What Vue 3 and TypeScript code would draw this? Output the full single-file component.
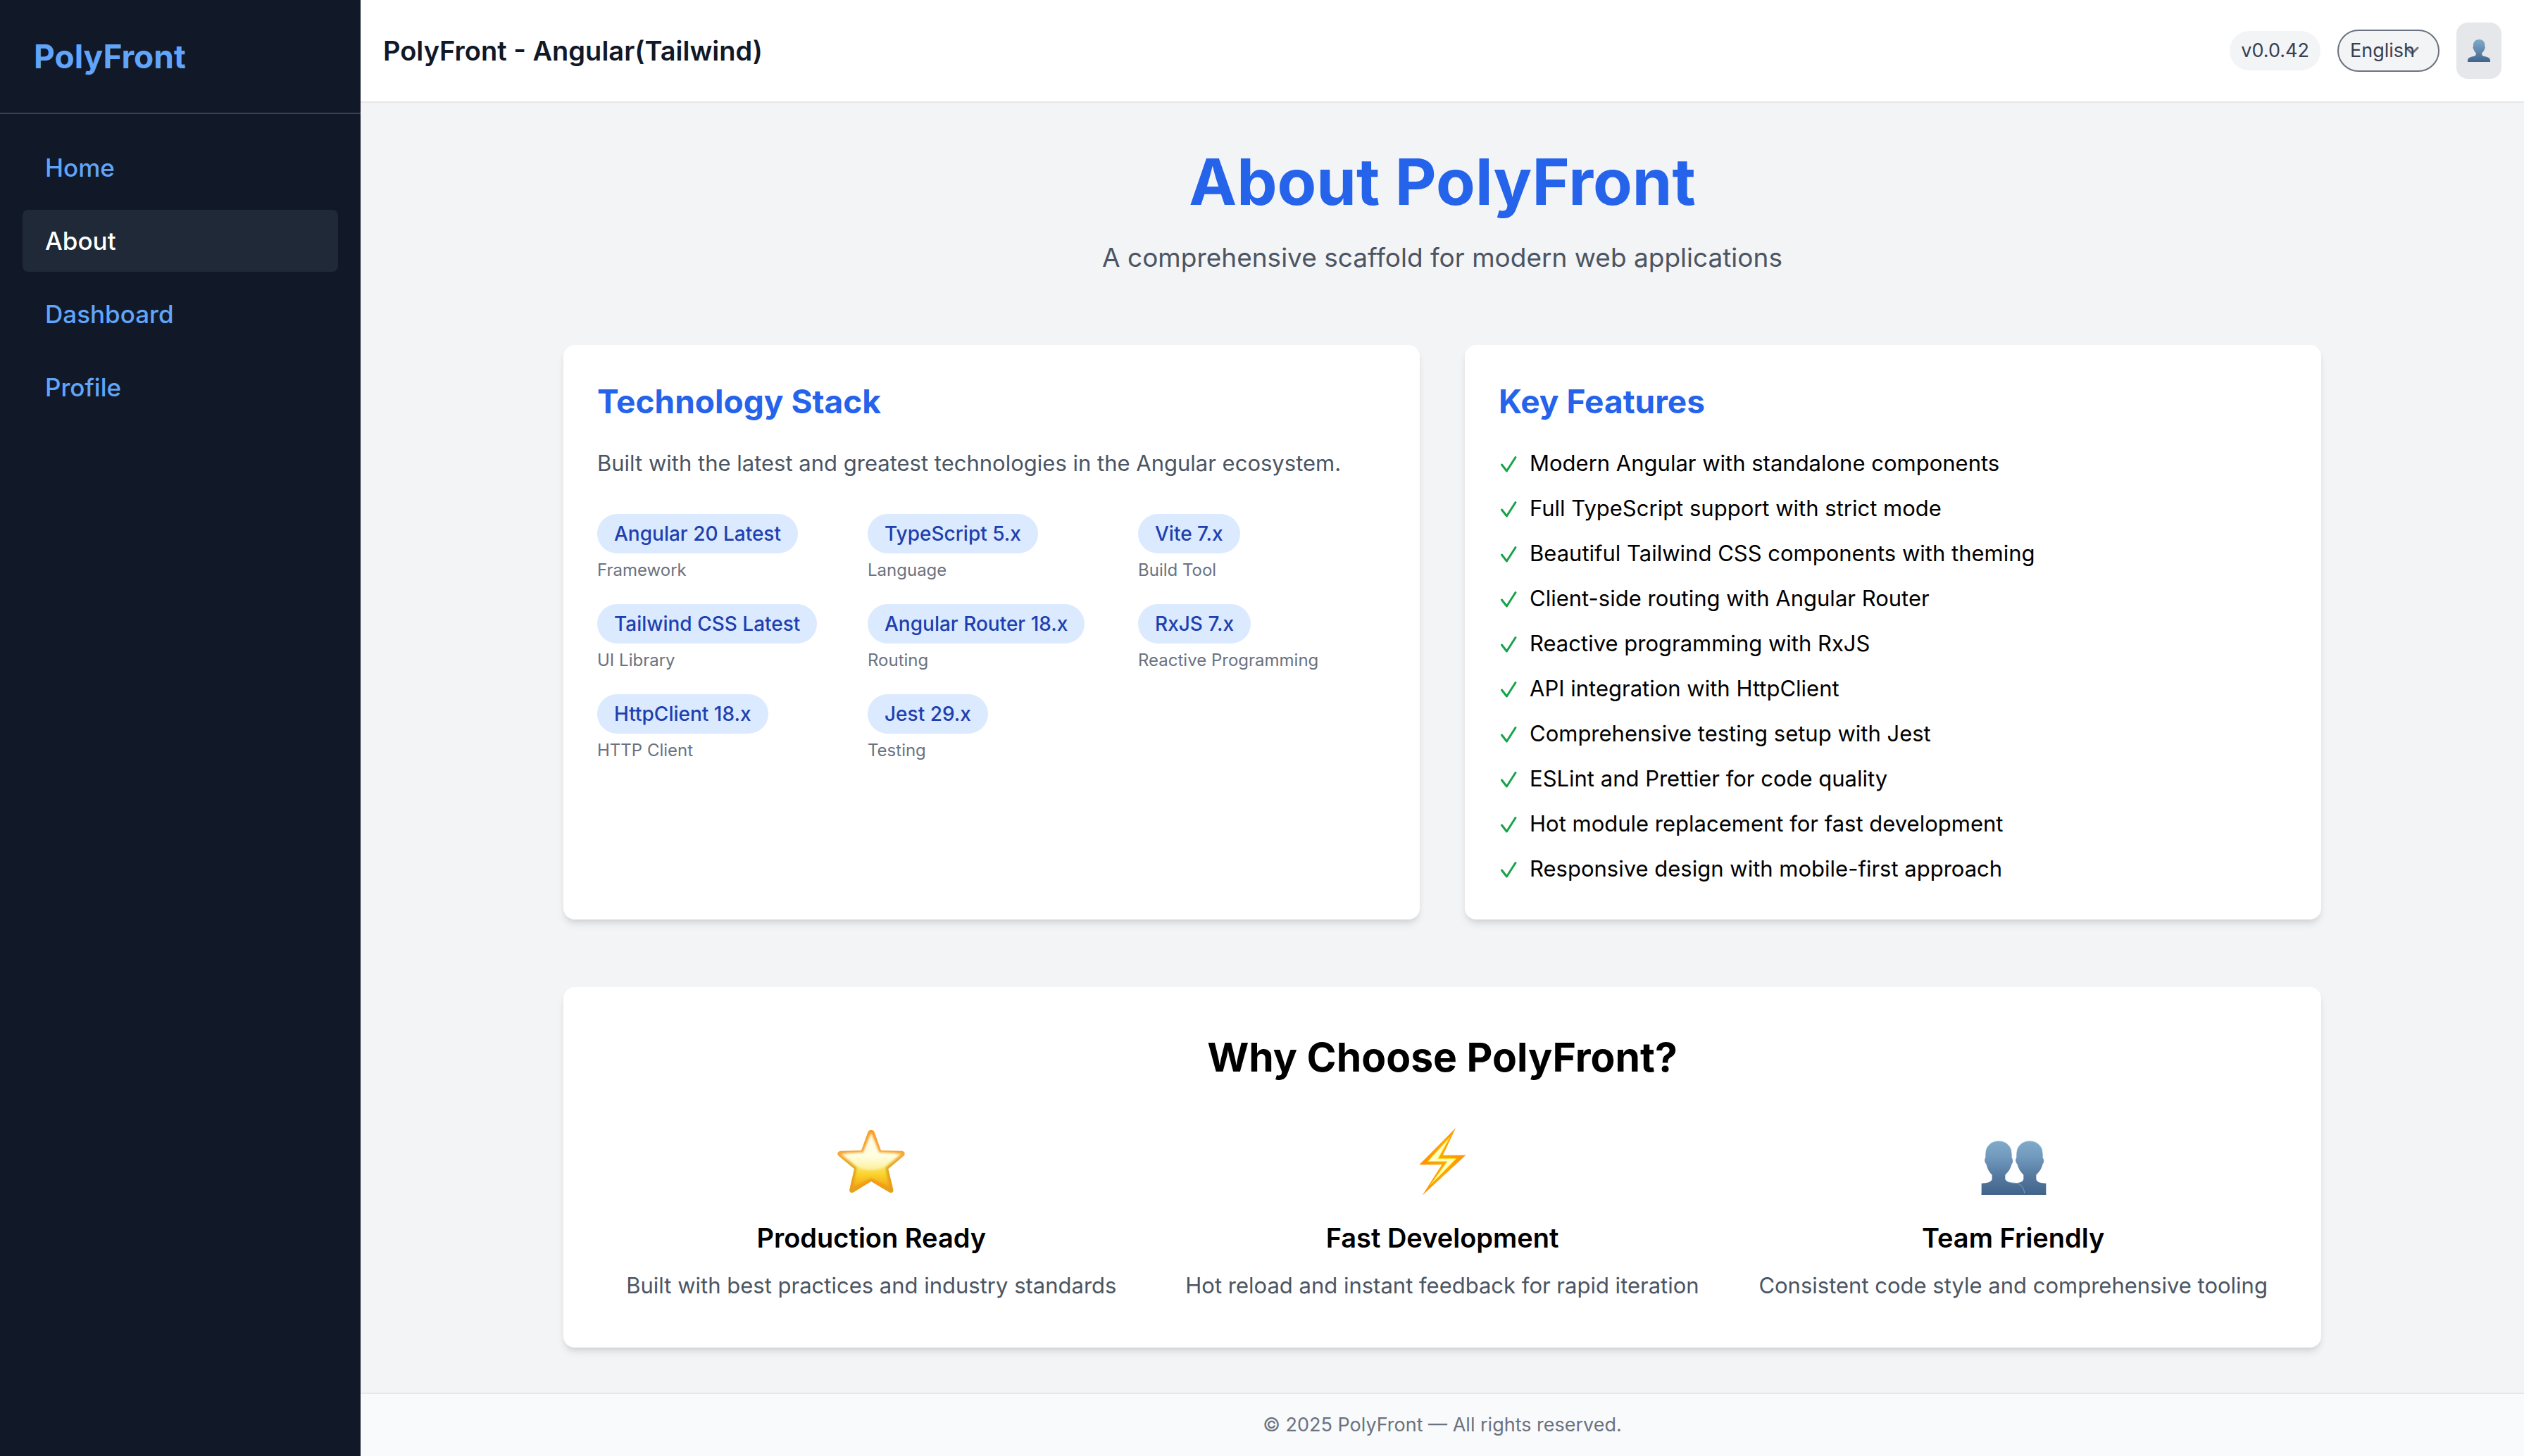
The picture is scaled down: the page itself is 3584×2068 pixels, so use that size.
<script setup lang="ts">
import { ref } from 'vue'

interface NavItem {
  label: string
  active?: boolean
}

interface Tech {
  name: string
  role: string
}

const navItems: NavItem[] = [
  { label: 'Home' },
  { label: 'About', active: true },
  { label: 'Dashboard' },
  { label: 'Profile' },
]

const language = ref('English')

const stack: Tech[] = [
  { name: 'Angular 20 Latest', role: 'Framework' },
  { name: 'TypeScript 5.x', role: 'Language' },
  { name: 'Vite 7.x', role: 'Build Tool' },
  { name: 'Tailwind CSS Latest', role: 'UI Library' },
  { name: 'Angular Router 18.x', role: 'Routing' },
  { name: 'RxJS 7.x', role: 'Reactive Programming' },
  { name: 'HttpClient 18.x', role: 'HTTP Client' },
  { name: 'Jest 29.x', role: 'Testing' },
]

const features: string[] = [
  'Modern Angular with standalone components',
  'Full TypeScript support with strict mode',
  'Beautiful Tailwind CSS components with theming',
  'Client-side routing with Angular Router',
  'Reactive programming with RxJS',
  'API integration with HttpClient',
  'Comprehensive testing setup with Jest',
  'ESLint and Prettier for code quality',
  'Hot module replacement for fast development',
  'Responsive design with mobile-first approach',
]
</script>

<template>
  <div class="layout">
    <aside class="sidebar">
      <div class="brand">PolyFront</div>
      <nav class="nav">
        <a
          v-for="item in navItems"
          :key="item.label"
          href="#"
          class="nav-link"
          :class="{ active: item.active }"
          >{{ item.label }}</a
        >
      </nav>
    </aside>

    <div class="page">
      <header class="topbar">
        <span class="title">PolyFront - Angular(Tailwind)</span>
        <div class="tools">
          <span class="version">v0.0.42</span>
          <div class="language">
            <svg class="chevron" viewBox="0 0 24 24" aria-hidden="true">
              <path d="M4 8l8 8 8-8" fill="none" stroke="#6b7280" stroke-width="3" stroke-linecap="round" stroke-linejoin="round" />
            </svg>
            <select v-model="language" class="language-select" aria-label="Language">
              <option>English</option>
            </select>
          </div>
          <button class="avatar" type="button" aria-label="User menu">
            <svg class="avatar-icon" viewBox="1212 168 96 96" aria-hidden="true">
              <defs>
                <linearGradient id="person" x1="0" y1="0" x2="0" y2="1">
                  <stop offset="0" stop-color="#7fabcb" />
                  <stop offset="0.5" stop-color="#6489ad" />
                  <stop offset="1" stop-color="#3f638a" />
                </linearGradient>
              </defs>
              <path
                fill="url(#person)"
                d="M1261 168c15 0 24 10 24 24v6c3 2 2 8-1 11-2 7-6 12-11 16v8c1 5 7 6 14 8 14 3 21 8 21 17v6h-96v-6c0-9 7-14 21-17 7-2 13-3 14-8v-8c-5-4-8-9-10-16-3-3-4-9-1-11v-6c0-14 10-24 25-24z"
              />
            </svg>
          </button>
        </div>
      </header>

      <main class="main">
        <div class="container">
          <div class="hero">
            <h1>About PolyFront</h1>
            <p>A comprehensive scaffold for modern web applications</p>
          </div>

          <div class="cards">
            <section class="card">
              <h2>Technology Stack</h2>
              <p class="intro">Built with the latest and greatest technologies in the Angular ecosystem.</p>
              <div class="stack">
                <div v-for="tech in stack" :key="tech.name" class="tech">
                  <span class="badge">{{ tech.name }}</span>
                  <span class="role">{{ tech.role }}</span>
                </div>
              </div>
            </section>

            <section class="card">
              <h2>Key Features</h2>
              <ul class="features">
                <li v-for="feature in features" :key="feature">
                  <svg class="check" viewBox="0 0 28 48" aria-hidden="true">
                    <path d="M4.500 26l7 9L24 15.500" fill="none" stroke="#16a34a" stroke-width="3" stroke-linecap="round" stroke-linejoin="round" />
                  </svg>
                  <span>{{ feature }}</span>
                </li>
              </ul>
            </section>
          </div>

          <section class="card why">
            <h2>Why Choose PolyFront?</h2>
            <div class="reasons">
              <div class="reason">
                <svg class="emoji" viewBox="116 96 288 288" aria-hidden="true">
                  <defs>
                    <linearGradient id="starEdge" x1="0" y1="0" x2="0" y2="1">
                      <stop offset="0" stop-color="#f99a24" />
                      <stop offset="0.4" stop-color="#f5a837" />
                      <stop offset="0.65" stop-color="#d9a81c" />
                      <stop offset="0.82" stop-color="#f59a12" />
                      <stop offset="1" stop-color="#d9a520" />
                    </linearGradient>
                    <linearGradient id="starFill" x1="0" y1="0" x2="0" y2="1">
                      <stop offset="0" stop-color="#ffe9b0" />
                      <stop offset="0.2" stop-color="#fffde8" />
                      <stop offset="0.45" stop-color="#fffcd2" />
                      <stop offset="0.62" stop-color="#fbe672" />
                      <stop offset="0.76" stop-color="#fcd32a" />
                      <stop offset="1" stop-color="#eda91a" />
                    </linearGradient>
                    <filter id="starSoft" x="-10%" y="-10%" width="120%" height="120%">
                      <feGaussianBlur stdDeviation="4" />
                    </filter>
                    <clipPath id="starClip">
                      <path d="M260 104c7 0 11 4 14 11l28 77 87 2c14 0 19 13 9 22l-65 55 21 87c3 13-8 18-18 12l-76-46-74 46c-11 6-21-1-18-13l20-86-66-55c-10-9-5-21 9-22l87-2 28-77c3-7 7-11 14-11z" />
                    </clipPath>
                  </defs>
                  <g clip-path="url(#starClip)">
                    <rect x="110" y="96" width="300" height="288" fill="url(#starEdge)" />
                    <path
                      filter="url(#starSoft)"
                      fill="url(#starFill)"
                      d="M260 116l33 86 95 5-67 58 16 84-77-39-77 39 16-84-67-58 95-5z"
                    />
                    <path d="M150 204l78-4 32-78 32 78 78 4-50 56q-60 30-120 0z" fill="#ffffe6" opacity="0.5" filter="url(#starSoft)" />
                  </g>
                </svg>
                <h3>Production Ready</h3>
                <p>Built with best practices and industry standards</p>
              </div>
              <div class="reason">
                <svg class="emoji" viewBox="90 96 288 288" aria-hidden="true">
                  <defs>
                    <linearGradient id="boltEdge" x1="0" y1="0" x2="1" y2="0">
                      <stop offset="0" stop-color="#ff9000" />
                      <stop offset="0.5" stop-color="#fda60a" />
                      <stop offset="1" stop-color="#ff9208" />
                    </linearGradient>
                  </defs>
                  <path d="M291 96L136 253h96l-83 130L334 212h-97z" fill="url(#boltEdge)" />
                  <path d="M266 136L172 239h83l-70 98L293 227h-77z" fill="#ffffc8" stroke="#ffe21f" stroke-width="3" />
                </svg>
                <h3>Fast Development</h3>
                <p>Hot reload and instant feedback for rapid iteration</p>
              </div>
              <div class="reason">
                <svg class="emoji" viewBox="92 96 288 288" aria-hidden="true">
                  <defs>
                    <linearGradient id="team" gradientUnits="userSpaceOnUse" x1="0" y1="152" x2="0" y2="381">
                      <stop offset="0" stop-color="#80aac9" />
                      <stop offset="0.3" stop-color="#7199bd" />
                      <stop offset="0.65" stop-color="#55799f" />
                      <stop offset="1" stop-color="#40648b" />
                    </linearGradient>
                  </defs>
                  <g fill="url(#team)">
                    <path d="M305 152c34 0 56 26 56 58v14c6 4 6 18 0 26-4 18-14 34-28 46v18c2 12 16 17 42 18v49H225v-49c30 0 52-4 54-18v-18c-14-12-22-28-27-46-8-8-8-22-3-27v-13c0-32 22-58 56-58z" />
                    <path d="M173 152c34 0 56 26 56 58v14c6 4 6 18 0 26-4 18-14 34-28 46v18c4 12 22 16 42 17 26 2 38 22 40 50H100v-49c26-1 42-6 45-18v-18c-14-12-20-28-25-46-8-8-8-22-3-27v-13c0-32 22-58 56-58z" />
                  </g>
                  <path d="M201 316c8 12 24 14 42 15 26 2 38 20 40 44" fill="none" stroke="#79a6c4" stroke-width="3" />
                  <path d="M119 195c5-26 26-42 54-42s49 16 54 42M251 195c5-26 26-42 54-42s49 16 54 42" fill="none" stroke="#8dbdd4" stroke-width="3" />
                  <path d="M100 379h275" stroke="#365a83" stroke-width="4" />
                </svg>
                <h3>Team Friendly</h3>
                <p>Consistent code style and comprehensive tooling</p>
              </div>
            </div>
          </section>
        </div>
      </main>

      <footer class="footer">© 2025 PolyFront — All rights reserved.</footer>
    </div>
  </div>
</template>

<style>
body {
  margin: 0;
  background: #f3f4f6;
}
</style>

<style scoped>
.layout {
  display: flex;
  min-height: 100vh;
  font-family: Inter, 'Liberation Sans', sans-serif;
  font-size: 31px;
  line-height: 48px;
  color: #000;
}

h1,
h2,
h3,
p,
ul {
  margin: 0;
  padding: 0;
}

.sidebar {
  flex: none;
  width: 512px;
  background: #111827;
}

.brand {
  padding: 48px;
  border-bottom: 2px solid #374151;
  color: #60a5fa;
  font-size: 46px;
  font-weight: 700;
  line-height: 64px;
}

.nav {
  display: flex;
  flex-direction: column;
  gap: 16px;
  padding: 32px;
}

.nav-link {
  padding: 16px 32px;
  border-radius: 8px;
  color: #60a5fa;
  font-size: 35px;
  font-weight: 500;
  line-height: 56px;
  text-decoration: none;
}

.nav-link.active {
  background: #1f2937;
  color: #fff;
}

.page {
  flex: 1;
  display: flex;
  flex-direction: column;
  min-width: 0;
  background: #f3f4f6;
}

.topbar {
  display: flex;
  align-items: center;
  justify-content: space-between;
  padding: 32px;
  border-bottom: 2px solid #e5e7eb;
  background: #fff;
}

.title {
  color: #111827;
  font-size: 38px;
  font-weight: 600;
  line-height: 56px;
}

.tools {
  display: flex;
  align-items: center;
  gap: 24px;
}

.version {
  padding: 8px 16px;
  border-radius: 28px;
  background: #f3f4f6;
  color: #374151;
  font-size: 27px;
  line-height: 40px;
}

.language {
  position: relative;
  display: flex;
  border-radius: 30px;
  background: #f3f4f6;
}

.language-select {
  position: relative;
  appearance: none;
  box-sizing: border-box;
  width: 145px;
  height: 60px;
  margin: 0;
  padding: 8px 16px;
  border: 2px solid #6b7280;
  border-radius: 30px;
  background: transparent;
  color: #374151;
  font-family: inherit;
  font-size: 27px;
  line-height: 40px;
}

.chevron {
  position: absolute;
  top: 18px;
  right: 27px;
  width: 24px;
  height: 24px;
}

.avatar {
  display: flex;
  align-items: center;
  justify-content: center;
  width: 64px;
  height: 80px;
  padding: 0;
  border: 0;
  border-radius: 16px;
  background: #e5e7eb;
}

.avatar-icon {
  width: 32px;
  height: 32px;
}

.main {
  flex: 1;
  padding: 64px 32px;
}

.container {
  max-width: 2496px;
  margin: 0 auto;
}

.hero {
  margin-bottom: 96px;
  text-align: center;
}

.hero h1 {
  margin-bottom: 32px;
  color: #2563eb;
  font-size: 91px;
  font-weight: 700;
  line-height: 96px;
}

.hero p {
  color: #4b5563;
  font-size: 37px;
  line-height: 56px;
}

.cards {
  display: grid;
  grid-template-columns: repeat(2, minmax(0, 1fr));
  gap: 64px;
  margin-bottom: 96px;
}

.card {
  padding: 48px;
  border-radius: 16px;
  background: #fff;
  box-shadow:
    0 8px 12px -2px rgba(0, 0, 0, 0.1),
    0 4px 8px -4px rgba(0, 0, 0, 0.1);
}

.card h2 {
  margin-bottom: 32px;
  color: #2563eb;
  font-size: 46px;
  font-weight: 700;
  line-height: 64px;
}

.intro {
  margin-bottom: 48px;
  color: #4b5563;
}

.stack {
  display: grid;
  grid-template-columns: repeat(3, minmax(0, 1fr));
  gap: 32px;
}

.tech {
  display: flex;
  flex-direction: column;
  align-items: flex-start;
  gap: 8px;
}

.badge {
  padding: 8px 24px;
  border-radius: 28px;
  background: #dbeafe;
  color: #1e40af;
  font-size: 28px;
  font-weight: 500;
  line-height: 40px;
  white-space: nowrap;
}

.role {
  color: #6b7280;
  font-size: 24px;
  line-height: 32px;
}

.features {
  display: flex;
  flex-direction: column;
  gap: 16px;
  list-style: none;
}

.features li {
  display: flex;
  gap: 16px;
}

.check {
  flex: none;
  width: 28px;
  height: 48px;
}

.card.why {
  padding: 64px;
  text-align: center;
}

.card.why h2 {
  margin-bottom: 64px;
  color: #000;
  font-size: 57px;
  line-height: 72px;
}

.reasons {
  display: grid;
  grid-template-columns: repeat(3, minmax(0, 1fr));
  gap: 64px;
}

.reason {
  display: flex;
  flex-direction: column;
  align-items: center;
}

.emoji {
  width: 96px;
  height: 96px;
  margin-bottom: 32px;
}

.reason h3 {
  margin-bottom: 16px;
  font-size: 38px;
  font-weight: 600;
  line-height: 56px;
}

.reason p {
  color: #4b5563;
}

.footer {
  padding: 24px;
  border-top: 2px solid #e5e7eb;
  background: #f9fafb;
  color: #6b7280;
  font-size: 27px;
  line-height: 40px;
  text-align: center;
}
</style>
